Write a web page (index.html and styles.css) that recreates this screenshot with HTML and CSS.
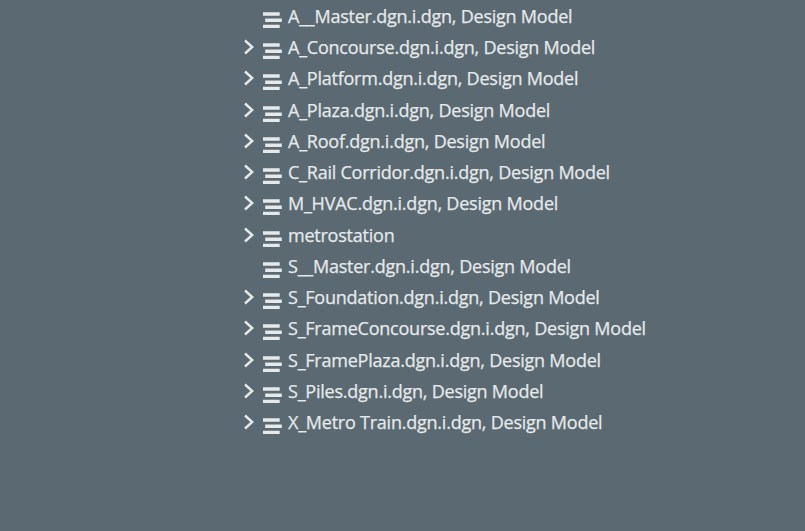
FILE: index.html
```html
<!DOCTYPE html>
<html lang="en">
<head>
<meta charset="utf-8">
<title>Models</title>
<link rel="stylesheet" href="styles.css">
</head>
<body>
<ul class="tree" id="tree"></ul>
<script src="tree.js"></script>
</body>
</html>
```
FILE: styles.css
```css
body {
  margin: 0;
  background: #5b6973;
  color: #e6e9ea;
  font-family: "Open Sans", sans-serif;
  font-size: 18px;
  overflow: hidden;
}
.tree {
  list-style: none;
  margin: 0;
  padding: 1px 0 0 243px;
}
.node {
  display: flex;
  height: 31.24px;
  line-height: 31px;
  white-space: nowrap;
}
.chevron {
  width: 12px;
  height: 16px;
  margin-top: 7px;
}
.model {
  width: 19px;
  height: 17px;
  margin: 11px 6px 0 8px;
}
.chevron path {
  fill: none;
  stroke: #e6e9ea;
  stroke-width: 2.4;
}
.model path {
  fill: #e6e9ea;
}
.leaf .chevron {
  visibility: hidden;
}
.label {
  letter-spacing: -0.23px;
  -webkit-text-stroke: 0.25px #e6e9ea;
}
```
FILE: tree.js
```js
const nodes = [
  ["A__Master.dgn.i.dgn, Design Model", true],
  ["A_Concourse.dgn.i.dgn, Design Model"],
  ["A_Platform.dgn.i.dgn, Design Model"],
  ["A_Plaza.dgn.i.dgn, Design Model"],
  ["A_Roof.dgn.i.dgn, Design Model"],
  ["C_Rail Corridor.dgn.i.dgn, Design Model"],
  ["M_HVAC.dgn.i.dgn, Design Model"],
  ["metrostation"],
  ["S__Master.dgn.i.dgn, Design Model", true],
  ["S_Foundation.dgn.i.dgn, Design Model"],
  ["S_FrameConcourse.dgn.i.dgn, Design Model"],
  ["S_FramePlaza.dgn.i.dgn, Design Model"],
  ["S_Piles.dgn.i.dgn, Design Model"],
  ["X_Metro Train.dgn.i.dgn, Design Model"]
];
document.getElementById("tree").innerHTML = nodes.map(([name, leaf]) =>
  `<li class="node${leaf ? " leaf" : ""}">
    <svg class="chevron" viewBox="0 0 12 16"><path d="M2 1.5 9.2 8 2 14.5"/></svg>
    <svg class="model" viewBox="0 0 19 17"><path d="M0 .3h16.7v3.4H0zM2.2 6.5h16.6v3.4H2.2zM0 12.7h16.7v3.4H0z"/></svg>
    <span class="label">${name}</span>
  </li>`).join("");
```
